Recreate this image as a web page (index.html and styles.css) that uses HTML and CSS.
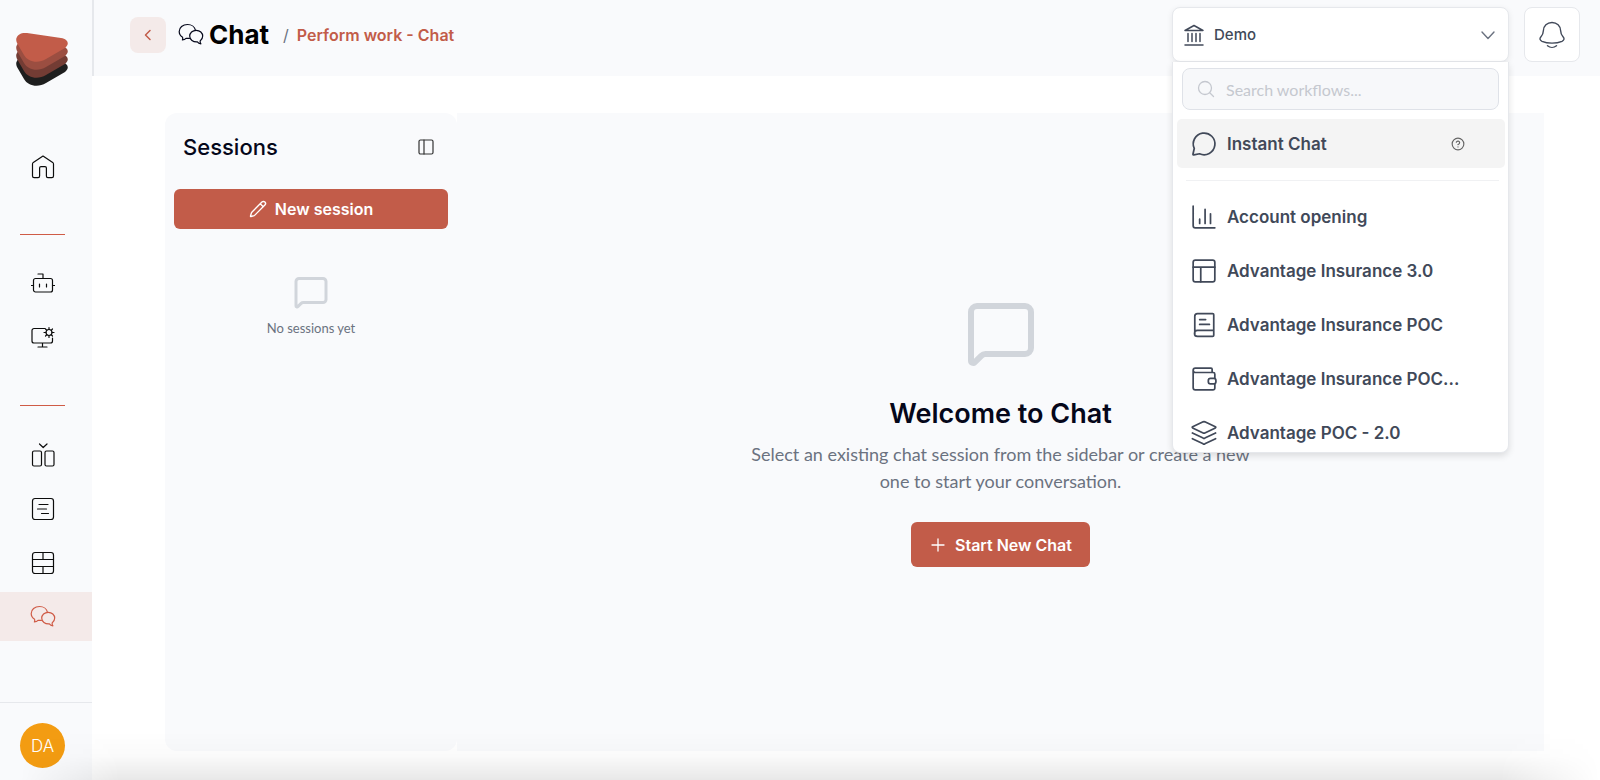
FILE: index.html
```html
<!DOCTYPE html>
<html lang="en">
<head>
<meta charset="utf-8">
<title>Chat</title>
<link rel="stylesheet" href="styles.css">
</head>
<body>
<svg class="sprite" aria-hidden="true">
  <symbol id="bubbles" viewBox="0 0 26 24">
    <path d="M9.500 1.500C4.800 1.500 1.200 4.600 1.200 8.500c0 2.400 1.300 4.500 3.400 5.800.3 1 .2 1.800-.2 2.600 1.600 0 2.700-.5 3.600-1.500h3.400M9.500 1.500c4.100 0 7.300 2.400 7.900 5.700"/>
    <path d="M18.200 7.300c3.700 0 6.500 2.500 6.500 5.800 0 2-1 3.800-2.600 4.800 0 1.200.2 2.100.8 2.900-1.500-.1-2.700-.7-3.500-1.900-4.300.4-7.700-2.200-7.700-5.800 0-3.300 2.800-5.800 6.500-5.800z"/>
  </symbol>
  <symbol id="message" viewBox="0 0 24 24">
    <path d="M22 17a2 2 0 0 1-2 2H6.828a2 2 0 0 0-1.414.586l-2.202 2.202A.71.71 0 0 1 2 21.286V5a2 2 0 0 1 2-2h16a2 2 0 0 1 2 2z"/>
  </symbol>
  <symbol id="slab" viewBox="0 0 52 29">
    <path d="M11 0l34 5c7 1 9 6 4 10L30 26c-8 5-18 3-22-4L1 10C-2 4 4-1 11 0z"/>
  </symbol>
</svg>

<aside class="sidebar">
  <a class="logo" href="#" aria-label="Home page">
    <svg viewBox="0 0 52 53">
      <use href="#slab" y="24" width="52" height="29" fill="#1e1e1e"/>
      <use href="#slab" y="16" width="52" height="29" fill="#733c34"/>
      <use href="#slab" y="8" width="52" height="29" fill="#9b4e41"/>
      <use href="#slab" width="52" height="29" fill="#c25c49"/>
    </svg>
  </a>
  <nav class="nav" aria-label="Main">
    <a class="nav-item" href="#" aria-label="Home"><svg viewBox="0 0 24 24"><path d="M1.500 9v12c0 1 .6 1.700 1.600 1.700h4c1 0 1.500-.6 1.500-1.600v-8c0-.9.500-1.400 1.400-1.400h4c.9 0 1.400.5 1.400 1.400v8c0 1 .5 1.600 1.500 1.600h4c1 0 1.600-.7 1.600-1.700V9c0-.7-.3-1.200-.8-1.600L12 1 2.300 7.400c-.5.400-.8.900-.8 1.600z"/></svg></a>
    <hr class="nav-line">
    <a class="nav-item" href="#" aria-label="Agents"><svg viewBox="0 0 24 24"><rect x="2.500" y="6.500" width="19" height="13.500" rx="2"/><path d="M7 2h5v4.500M2.500 13.500H0M24 13.500h-2.500M8.500 12v3M15.500 12v3"/></svg></a>
    <a class="nav-item" href="#" aria-label="System settings"><svg viewBox="0 0 24 24"><path d="M14 2.500H3a2 2 0 0 0-2 2v10.500a2 2 0 0 0 2 2h16.500a2 2 0 0 0 2-2V12M11.500 17v4M7 21h9"/><circle cx="18" cy="6.500" r="3"/><path d="M18 3.500V1.500M18 11.500v-2M15 6.500h-2M23 6.500h-2M15.900 4.400l-1.400-1.400M21.500 10l-1.400-1.400M20.100 4.400L21.500 3M14.500 10l1.400-1.400"/></svg></a>
    <hr class="nav-line">
    <a class="nav-item" href="#" aria-label="Compare"><svg viewBox="0 0 24 24"><rect x="1.500" y="8" width="9" height="15" rx="1.500"/><rect x="14" y="8" width="9" height="15" rx="1.500"/><path d="M8.500 1l3.700 3.500L16 1"/></svg></a>
    <a class="nav-item" href="#" aria-label="Forms"><svg viewBox="0 0 24 24"><rect x="1.500" y="1.500" width="21" height="21" rx="2.500"/><path d="M8 7.500h9M6.500 12h9M10.500 16.500h7"/></svg></a>
    <a class="nav-item" href="#" aria-label="Tables"><svg viewBox="0 0 24 24"><rect x="1.500" y="1.500" width="21" height="21" rx="2.500"/><path d="M1.500 8.500h21M1.500 15.500h21M12 1.500v7M12 15.500v7"/></svg></a>
    <a class="nav-item active" href="#" aria-label="Chat" aria-current="page"><svg class="wide" viewBox="0 0 26 24"><use href="#bubbles"/></svg></a>
  </nav>
  <div class="account"><button class="avatar" type="button">DA</button></div>
</aside>

<div class="page">
  <header class="topbar">
    <button class="back" type="button" aria-label="Back"><svg viewBox="0 0 18 18"><path d="M11 4.500L6.500 9l4.500 4.500"/></svg></button>
    <svg class="title-icon" viewBox="0 0 26 24"><use href="#bubbles"/></svg>
    <h1 class="title">Chat</h1>
    <span class="slash">/</span>
    <a class="crumb" href="#">Perform work - Chat</a>

    <div class="picker">
      <button class="picker-button" type="button" aria-haspopup="listbox" aria-expanded="true">
        <svg class="bank" viewBox="0 0 22 24"><path d="M2 7.500L11 2.500l9 5zM2 22h18M5 10.500v8M9 10.500v8M13 10.500v8M17 10.500v8"/></svg>
        <span>Demo</span>
        <svg class="chevron" viewBox="0 0 16 16"><path d="M2 5l6 6.500L14 5"/></svg>
      </button>
      <div class="menu">
        <label class="search">
          <svg viewBox="0 0 18 18"><circle cx="8" cy="8" r="6.500"/><path d="M13 13l3.500 3.500"/></svg>
          <input type="text" placeholder="Search workflows..." aria-label="Search workflows">
        </label>
        <button class="option current" type="button">
          <svg viewBox="0 0 24 24"><path d="M7.900 21A10 10 0 1 0 3 16.100L1.800 21.500Q1.800 22.200 2.600 22.100Z"/></svg>
          <span>Instant Chat</span>
          <svg class="help" viewBox="0 0 24 24"><circle cx="12" cy="12" r="10"/><path d="M9.100 9a3 3 0 0 1 5.800 1c0 2-3 3-3 3M12 17h.01"/></svg>
        </button>
        <hr class="menu-line">
        <button class="option" type="button"><svg viewBox="0 0 24 24"><path d="M2 2v18a2 2 0 0 0 2 2h18M8 18v-4M13 18V5M18 18V9"/></svg><span>Account opening</span></button>
        <button class="option" type="button"><svg viewBox="0 0 24 24"><rect x="2" y="2" width="20" height="20" rx="2"/><path d="M2 8.500h20M9 22V8.500"/></svg><span>Advantage Insurance 3.0</span></button>
        <button class="option" type="button"><svg viewBox="0 0 24 24"><path d="M3.500 20v-16A2.500 2.500 0 0 1 6 1.500H20a1 1 0 0 1 1 1v19a1 1 0 0 1-1 1H6a2.500 2.500 0 0 1 0-5.500H21M8 7h5.500M8 11.500h9"/></svg><span>Advantage Insurance POC</span></button>
        <button class="option" type="button"><svg viewBox="0 0 24 24"><path d="M19.500 6V3a1 1 0 0 0-1-1h-14.500a2 2 0 0 0 0 4h16.500a1.500 1.500 0 0 1 1.500 1.500v3.500M2 4v16a2 2 0 0 0 2 2h16.500a1.500 1.500 0 0 0 1.500-1.500v-4"/><rect x="16" y="11.500" width="7" height="5" rx="2"/></svg><span>Advantage Insurance POC...</span></button>
        <button class="option" type="button"><svg viewBox="0 0 24 24"><path d="M11.200 1.700a2 2 0 0 1 1.600 0l9.700 4.600q.7.500 0 1l-9.700 4.700a2 2 0 0 1-1.600 0L1.500 7.300q-.7-.5 0-1zM1.300 12l9.900 4.700a2 2 0 0 0 1.600 0L22.700 12M1.300 17.300l9.900 4.700a2 2 0 0 0 1.600 0l9.900-4.700"/></svg><span>Advantage POC - 2.0</span></button>
      </div>
    </div>
    <button class="bell" type="button" aria-label="Notifications"><svg viewBox="0 0 26 28"><path d="M13 1.500C8 1.500 4.600 5 4.400 9.500c-.1 3-.4 4-2.400 6.200-1.700 1.900-1.100 3.600 1 4.600 5.700 2.400 14.300 2.400 20 0 2.100-1 2.700-2.700 1-4.600-2-2.200-2.300-3.200-2.400-6.200C21.400 5 18 1.500 13 1.500zM8.500 24.700c2.600 2.200 6.400 2.200 9 0"/></svg></button>
  </header>

  <main class="content">
    <section class="sessions">
      <div class="sessions-head">
        <h2>Sessions</h2>
        <button class="collapse" type="button" aria-label="Collapse sessions"><svg viewBox="0 0 18 18"><rect x="2" y="2" width="14" height="14" rx="1.500"/><path d="M7 2v14"/></svg></button>
      </div>
      <button class="primary new-session" type="button">
        <svg viewBox="0 0 24 24"><path d="M21.200 6.800a1 1 0 0 0-4-4L3.800 16.200a2 2 0 0 0-.5.800L2 21.400a.5.5 0 0 0 .6.600L7 20.700a2 2 0 0 0 .8-.5zM15 5l4 4"/></svg>
        New session
      </button>
      <div class="no-sessions">
        <svg viewBox="0 0 24 24"><use href="#message"/></svg>
        <p>No sessions yet</p>
      </div>
    </section>
    <section class="welcome">
      <svg class="welcome-icon" viewBox="0 0 24 24"><use href="#message"/></svg>
      <h2>Welcome to Chat</h2>
      <p>Select an existing chat session from the sidebar or create a new one to start your conversation.</p>
      <button class="primary start" type="button">
        <svg viewBox="0 0 18 18"><path d="M9 3v12M3 9h12"/></svg>
        Start New Chat
      </button>
    </section>
  </main>
</div>
</body>
</html>
```

FILE: styles.css
```css
:root {
  --accent: #c25c49;
  --accent-soft: #f4eae9;
  --surface: #f9fafc;
  --line: #e6e8ec;
  --ink: #05071a;
  --slate: #414959;
  --muted: #6b7280;
  --display: Inter, "Liberation Sans", sans-serif;
  --text: Lato, "Liberation Sans", sans-serif;
}

* { box-sizing: border-box; }

body {
  margin: 0;
  display: flex;
  min-height: 100vh;
  background: #fff;
  color: var(--ink);
  font-family: var(--display);
  font-size: 16px;
}

body::after {
  content: "";
  position: fixed;
  inset: auto 0 0 0;
  height: 48px;
  background: linear-gradient(rgba(0, 0, 0, 0), rgba(0, 0, 0, .02) 50%, rgba(0, 0, 0, .09));
  -webkit-mask-image: linear-gradient(90deg, transparent 20px, #000 120px, #000 calc(100% - 100px), transparent);
  mask-image: linear-gradient(90deg, transparent 20px, #000 120px, #000 calc(100% - 100px), transparent);
  pointer-events: none;
}

h1, h2, p { margin: 0; }
a { color: inherit; text-decoration: none; }

button {
  padding: 0;
  border: 0;
  background: none;
  color: inherit;
  font: inherit;
  cursor: pointer;
}

svg {
  display: block;
  flex: none;
  fill: none;
  stroke: currentColor;
  stroke-width: 1.2;
  stroke-linecap: round;
  stroke-linejoin: round;
}

.sprite { position: absolute; width: 0; height: 0; }

/* Sidebar */
.sidebar {
  display: flex;
  flex: none;
  flex-direction: column;
  width: 92px;
  background: var(--surface);
}

.logo { padding: 33px 24px 56px 16px; }
.logo svg { width: 52px; height: 53px; stroke: none; }

.nav { display: flex; flex-direction: column; }

.nav-item {
  display: flex;
  align-items: center;
  justify-content: center;
  height: 49px;
  padding-right: 6px;
  color: #0c0c0c;
}

.nav-item + .nav-item { margin-top: 5px; }
.nav-item svg { width: 24px; height: 24px; }
.nav-item svg.wide { width: 26px; }
.nav-item.active { background: var(--accent-soft); color: #cf5b46; }

.nav-line {
  width: 45px;
  height: 1px;
  margin: 43px 0 24px 20px;
  border: 0;
  background: #cf5b46;
}

.account {
  margin-top: auto;
  padding: 20px 20px 12px;
  border-top: 1px solid var(--line);
}

.avatar {
  display: block;
  width: 45px;
  height: 45px;
  border-radius: 50%;
  background: #f39c12;
  color: #fff;
  font-size: 17px;
  font-weight: 300;
}

/* Top bar */
.page { display: flex; flex: 1; flex-direction: column; min-width: 0; }

.topbar {
  display: flex;
  align-items: center;
  min-height: 76px;
  padding: 7px 20px 14px 36px;
  border-left: 2px solid var(--line);
  background: var(--surface);
}

.back {
  display: grid;
  place-items: center;
  width: 36px;
  height: 36px;
  border-radius: 8px;
  background: var(--accent-soft);
  color: var(--accent);
}

.back svg { width: 18px; height: 18px; stroke-width: 1.5; }
.title-icon { width: 26px; height: 24px; margin: 0 5px 0 12px; }
.title { font-size: 26px; font-weight: 700; line-height: 36px; color: #000; }
.slash { margin: 0 8px 0 14px; color: var(--muted); }
.crumb { color: var(--accent); font-weight: 600; }

.picker { position: relative; width: 337px; margin-left: auto; }

.picker-button {
  display: flex;
  align-items: center;
  width: 100%;
  height: 55px;
  padding: 0 12px 0 10px;
  border: 1px solid var(--line);
  border-radius: 8px;
  background: #fff;
  box-shadow: 0 2px 6px rgba(0, 0, 0, .08);
  color: var(--slate);
  font-weight: 500;
  font-size: 15px;
}

.bank { width: 22px; height: 24px; margin-right: 9px; stroke-width: 1.5; }
.chevron { width: 16px; height: 16px; margin-left: auto; color: var(--muted); stroke-width: 1.4; }

.menu {
  position: absolute;
  z-index: 2;
  top: 100%;
  left: 0;
  right: 0;
  height: 391px;
  padding: 6px 3px 0 4px;
  overflow: hidden;
  border: 1px solid var(--line);
  border-top: 0;
  border-radius: 0 0 8px 8px;
  background: #fff;
  box-shadow: 0 3px 7px rgba(0, 0, 0, .12);
}

.search {
  display: flex;
  align-items: center;
  height: 42px;
  margin: 0 6px 9px 5px;
  padding: 0 14px;
  border: 1px solid #dfe2e8;
  border-radius: 8px;
  background: #f7f8fa;
  color: #c5c8cf;
}

.search svg { width: 18px; height: 18px; margin-right: 11px; stroke-width: 1.3; }

.search input {
  flex: 1;
  min-width: 0;
  padding: 0;
  border: 0;
  outline: 0;
  background: none;
  color: var(--slate);
  font: 16px var(--text);
}

.search input::placeholder { color: #c5c8cf; opacity: 1; }

.option {
  display: flex;
  align-items: center;
  gap: 10px;
  width: 100%;
  height: 49px;
  margin-bottom: 5px;
  padding: 0 40px 0 14px;
  border-radius: 5px;
  color: var(--slate);
  font-size: 17px;
  font-weight: 600;
}

.option svg { width: 26px; height: 26px; stroke-width: 1.6; }
.option.current { margin-bottom: 12px; background: #f4f4f4; }
.option .help { width: 14px; height: 14px; margin-left: auto; stroke-width: 2; color: #666; }
.menu-line { height: 1px; margin: 0 6px 11px 9px; border: 0; background: #f0f1f3; }

.bell {
  display: grid;
  place-items: center;
  width: 56px;
  height: 55px;
  margin-left: 15px;
  border: 1px solid var(--line);
  border-radius: 8px;
  background: #fff;
  color: var(--slate);
}

.bell svg { width: 26px; height: 28px; stroke-width: 1.4; }

/* Content */
.content { display: flex; flex: 1; padding: 37px 56px 29px 73px; }

.sessions { flex: none; width: 292px; border-radius: 12px; background: var(--surface); }

.sessions-head {
  display: flex;
  align-items: center;
  justify-content: space-between;
  height: 67px;
  margin-bottom: 9px;
  padding: 0 22px 0 18px;
}

.sessions-head h2 { font-size: 22px; font-weight: 500; }
.collapse svg { width: 18px; height: 18px; color: #333; }

.primary {
  display: flex;
  align-items: center;
  justify-content: center;
  border-radius: 6px;
  background: var(--accent);
  color: #fff;
  font-weight: 600;
}

.new-session { gap: 8px; width: calc(100% - 18px); height: 40px; margin: 0 9px; }
.new-session svg { width: 18px; height: 18px; stroke-width: 1.8; }

.no-sessions {
  display: flex;
  flex-direction: column;
  align-items: center;
  gap: 8px;
  padding-top: 45px;
  color: var(--muted);
  font: 13px/20px var(--text);
}

.no-sessions svg { width: 36px; height: 36px; color: #d1d5db; stroke-width: 2; }

.welcome {
  display: flex;
  flex: 1;
  flex-direction: column;
  align-items: center;
  justify-content: center;
  background: var(--surface);
  text-align: center;
}

.welcome-icon { width: 72px; height: 72px; margin-bottom: 27px; color: #d1d5db; stroke-width: 2; }
.welcome h2 { margin-bottom: 9px; font-size: 27px; font-weight: 600; line-height: 36px; }

.welcome p {
  max-width: 504px;
  margin-bottom: 27px;
  color: var(--muted);
  font: 18px/27px var(--text);
}

.start { gap: 8px; height: 45px; padding: 0 18px; }
.start svg { width: 18px; height: 18px; stroke-width: 1.3; }
```
